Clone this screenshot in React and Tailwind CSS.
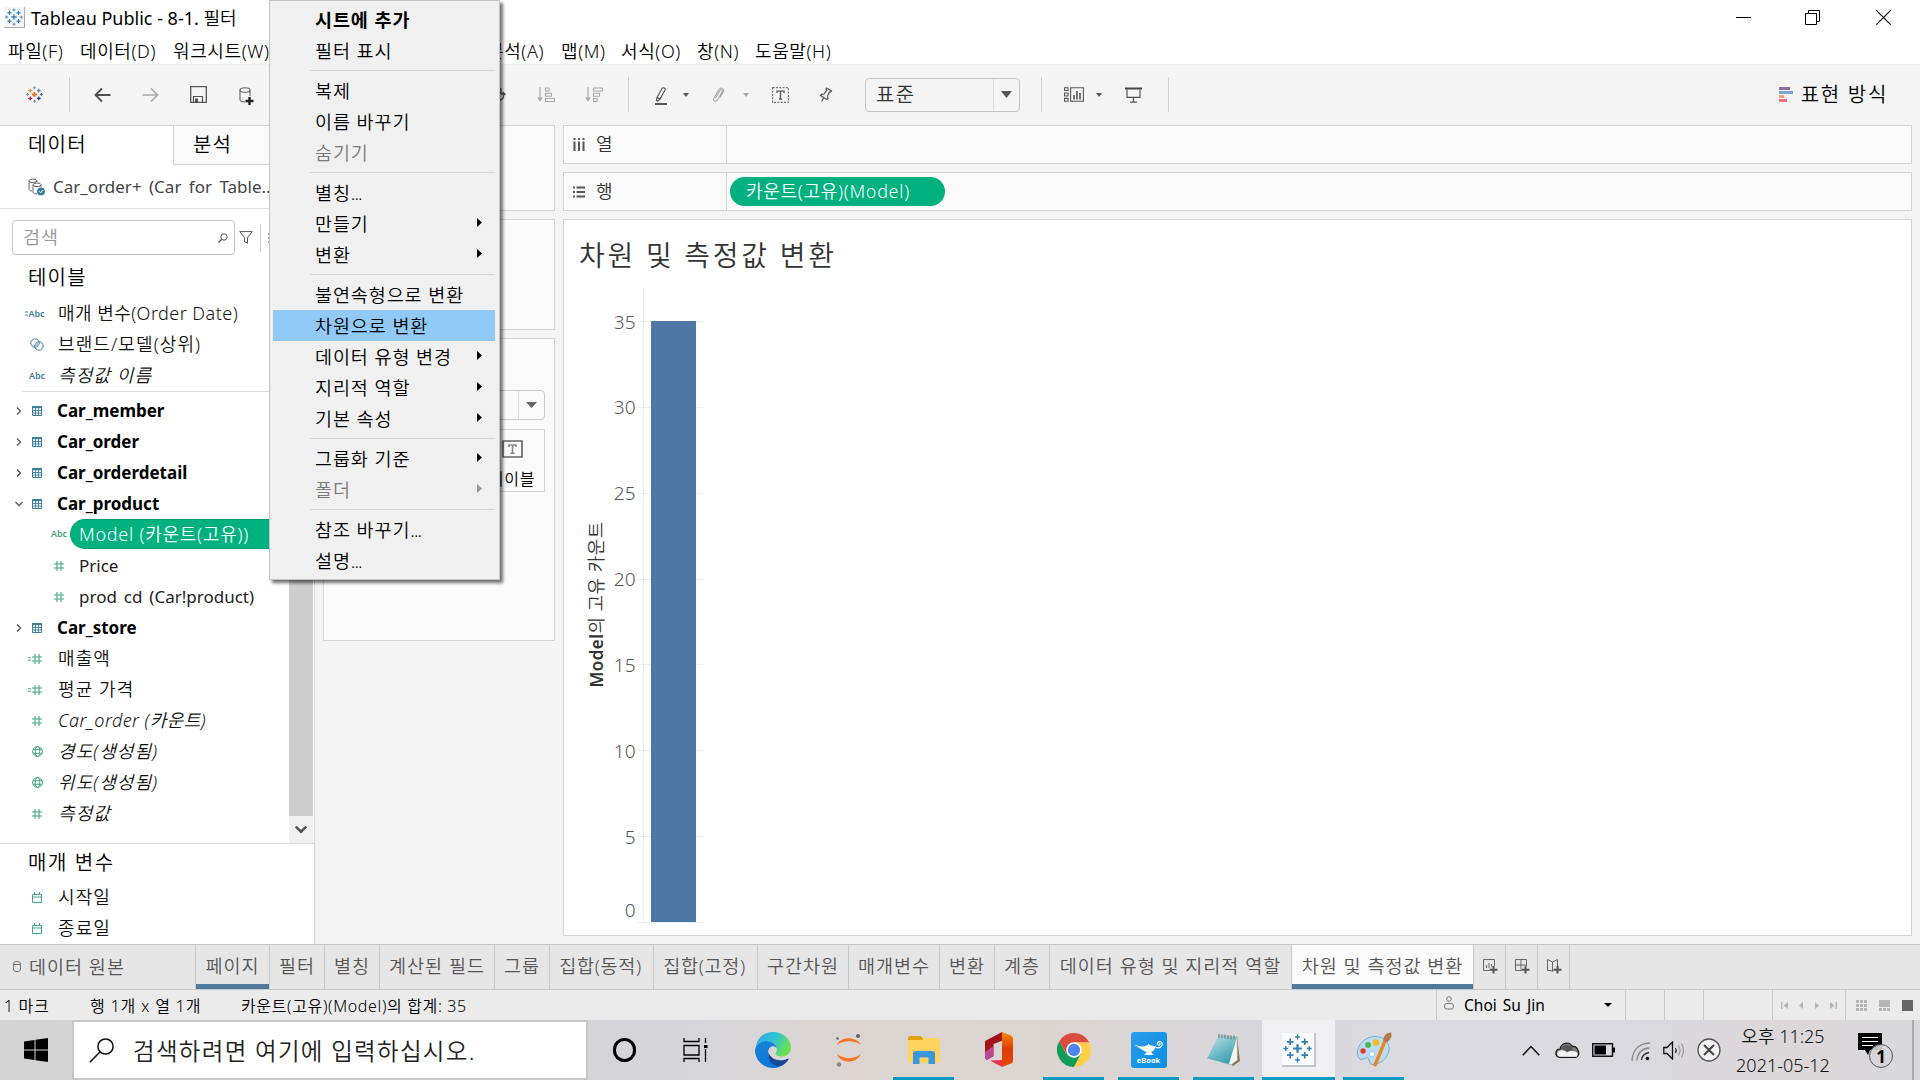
import React from "react";

const Svg = ({ w, h, vb, className = "", children }) => (
  <svg width={w} height={h} viewBox={vb || `0 0 ${w} ${h}`} className={`shrink-0 block ${className}`} fill="none" preserveAspectRatio="none">
    {children}
  </svg>
);

const plus = (x, y, r) => `M${x - r} ${y}H${x + r}M${x} ${y - r}V${y + r}`;

const TableauMark = ({ size, colors, sw = 1.4 }) => {
  const c = colors || Array(9).fill("#2f7fb3");
  return (
    <Svg w={size} h={size} vb="0 0 24 24">
      <path d={plus(12, 12, 3.6)} stroke={c[0]} strokeWidth={sw * 1.3} />
      <path d={plus(6, 6.5, 2.7)} stroke={c[1]} strokeWidth={sw} />
      <path d={plus(18, 6.5, 2.7)} stroke={c[2]} strokeWidth={sw} />
      <path d={plus(6, 17.5, 2.7)} stroke={c[3]} strokeWidth={sw} />
      <path d={plus(18, 17.5, 2.7)} stroke={c[4]} strokeWidth={sw} />
      <path d={plus(12, 2.5, 2)} stroke={c[5]} strokeWidth={sw * 0.8} />
      <path d={plus(12, 21.5, 2)} stroke={c[6]} strokeWidth={sw * 0.8} />
      <path d={plus(2.3, 12, 2)} stroke={c[7]} strokeWidth={sw * 0.8} />
      <path d={plus(21.7, 12, 2)} stroke={c[8]} strokeWidth={sw * 0.8} />
    </Svg>
  );
};

const brand = ["#e8762d", "#eb9b3a", "#59879b", "#c72035", "#1f457e", "#7199a6", "#7a8eb5", "#7199a6", "#5b6591"];

/* ---------- title + menu bar ---------- */

const MenuItem = ({ className = "", children }) => <span className={`shrink-0 whitespace-pre ${className}`}>{children}</span>;

const TitleBar = () => (
  <div className="flex h-[34px] items-center bg-white">
    <div className="ml-[4px] flex h-[21px] w-[21px] shrink-0 items-center justify-center border-b border-r border-[#aaa] bg-[#f4f6f8]">
      <TableauMark size={18} />
    </div>
    <span className="ml-[6px] mt-[3px] text-[18px] text-black"><span className="font-normal">Tableau Public - 8-1. </span>필터</span>
    <div className="ml-auto mr-[29px] flex items-center text-black">
      <Svg w={15} h={15}><path d="M0 7.5H15" stroke="#000" /></Svg>
      <Svg w={15} h={15} className="ml-[54px]"><path d="M3.5 3V.5H14.5V11.5H12M.5 3.5H11.5V14.5H.5Z" stroke="#000" /></Svg>
      <Svg w={15} h={15} className="ml-[56px]"><path d="M.3.3L14.7 14.7M14.7.3L.3 14.7" stroke="#000" strokeWidth="1.1" /></Svg>
    </div>
  </div>
);

const MenuBar = () => (
  <div className="flex h-[30px] items-center bg-white pl-[8px] pt-[4px] text-[18px] tracking-[0.6px] text-black">
    <MenuItem className="w-[72px]">파일(F)</MenuItem>
    <MenuItem className="w-[93px]">데이터(D)</MenuItem>
    <MenuItem>워크시트(W)</MenuItem>
    <div className="ml-auto flex w-[1433px]">
      <MenuItem className="w-[74px]">분석(A)</MenuItem>
      <MenuItem className="w-[60px]">맵(M)</MenuItem>
      <MenuItem className="w-[76px]">서식(O)</MenuItem>
      <MenuItem className="w-[58px]">창(N)</MenuItem>
      <MenuItem>도움말(H)</MenuItem>
    </div>
  </div>
);

/* ---------- toolbar ---------- */

const Slot = ({ className = "", children }) => (
  <div className={`flex h-[36px] shrink-0 items-center justify-center ${className}`}>{children}</div>
);
const Divider = ({ className = "" }) => <div className={`h-[35px] w-px shrink-0 bg-[#d0d0d0] ${className}`} />;
const Caret = ({ color = "#555" }) => <Svg w={6} h={4}><path d="M0 0H6L3 4Z" fill={color} /></Svg>;

const SortIcon = ({ desc }) => (
  <Svg w={18} h={16}>
    <path d="M3 0V12" stroke="#a9a9a9" strokeWidth="1.2" />
    <path d="M0 10.5H6L3 14.5Z" fill="#a9a9a9" />
    {desc ? (
      <path d="M8.5 1H17.5V4H8.5ZM8.5 6.3H14.5V9.3H8.5ZM8.5 11.5H12V14.5H8.5Z" stroke="#a9a9a9" strokeWidth="1.1" />
    ) : (
      <path d="M8.5 1H12V4H8.5ZM8.5 6.3H14.5V9.3H8.5ZM8.5 11.5H17.5V14.5H8.5Z" stroke="#a9a9a9" strokeWidth="1.1" />
    )}
  </Svg>
);

const Toolbar = () => (
  <div className="flex h-[61px] items-center border-t border-[#efefef] bg-[#f4f4f4] pb-px">
    <Slot className="w-[69px]"><TableauMark size={17} colors={brand} sw={2} /></Slot>
    <Divider />
    <Slot className="w-[64px]">
      <Svg w={17} h={16}><path d="M16.5 8H1.5M8 1.5L1.5 8L8 14.5" stroke="#4f4f4f" strokeWidth="1.8" /></Svg>
    </Slot>
    <Slot className="w-[32px]">
      <Svg w={17} h={16}><path d="M.5 8H15.5M9 1.5L15.5 8L9 14.5" stroke="#a9a9a9" strokeWidth="1.7" /></Svg>
    </Slot>
    <Slot className="w-[64px]">
      <Svg w={17} h={17}>
        <path d="M.7.7H16.3V16.3H.7Z" stroke="#555" strokeWidth="1.3" />
        <path d="M3.5 16V10.5H12.5V16" stroke="#555" strokeWidth="1.2" /><path d="M5 12.5H8V16H5Z" fill="#555" />
      </Svg>
    </Slot>
    <Slot className="w-[32px] pt-[4px]">
      <Svg w={15} h={19}>
        <ellipse cx="6" cy="3" rx="5" ry="2.3" stroke="#666" strokeWidth="1.1" />
        <path d="M1 3V12.5C1 14 3 15 6 15M11 3V9" stroke="#666" strokeWidth="1.1" />
        <path d="M10.5 10V18M6.5 14H14.5" stroke="#222" strokeWidth="2.4" />
      </Svg>
    </Slot>
    <Slot className="ml-[227px] w-[20px]">
      <Svg w={14} h={16}><path d="M1 2H9V6H1ZM8 13C12 12 12 9 11.5 6M9.5 8L11.5 5.5L13.5 8" stroke="#555" strokeWidth="1.3" /></Svg>
    </Slot>
    <Slot className="ml-[20px] w-[34px]"><SortIcon /></Slot>
    <Slot className="ml-[14px] w-[34px]"><SortIcon desc /></Slot>
    <Divider className="ml-[17px]" />
    <Slot className="ml-[16px] w-[32px] pt-[2px]">
      <Svg w={14} h={18}>
        <path d="M2.5 13.5L3 10.5L8 1.5Q9 .3 10.3 1T11 3L6 12L3.5 14.2ZM3 10.5L6 12" stroke="#555" strokeWidth="1.2" />
        <path d="M1 17H13" stroke="#555" strokeWidth="2" />
      </Svg>
    </Slot>
    <Slot className="ml-[4px] w-[10px]"><Caret /></Slot>
    <Slot className="ml-[10px] w-[34px]">
      <Svg w={14} h={16}>
        <path d="M4.5 11L9 3.5C10 2 12 3 11 5L6.5 13C5 15.5 1.5 14 3 11L8 2.5C9.5 0 13.5 1.5 12.5 4.5L9 10.5" stroke="#a9a9a9" strokeWidth="1.1" />
      </Svg>
    </Slot>
    <Slot className="ml-[6px] w-[10px]"><Caret color="#aaa" /></Slot>
    <Slot className="ml-[12px] w-[34px]">
      <Svg w={17} h={16}>
        <path d="M.6.6H16.4V15.4H.6Z" stroke="#777" strokeDasharray="2 1.3" strokeWidth="1.2" />
        <path d="M5 6V4.2H12V6M8.5 4.2V12M7 12H10" stroke="#555" strokeWidth="1.3" />
      </Svg>
    </Slot>
    <Slot className="ml-[12px] w-[34px]">
      <Svg w={14} h={16}>
        <path d="M7.5 1L12.5 4L11.5 5.2L10.5 5L8.5 9L9 11.5L8 12.5L1.5 8.5L2.5 7.3L5 7L7.8 3.2L7 2ZM5 10.5L2.5 14.5" stroke="#555" strokeWidth="1.2" />
      </Svg>
    </Slot>
    <div className="ml-[22px] flex h-[34px] w-[155px] shrink-0 items-center rounded-sm border border-[#c4c4c4]">
      <span className="ml-[10px] text-[20px] leading-none tracking-[1.4px] text-[#333]">표준</span>
      <div className="ml-auto flex h-full w-[26px] items-center justify-center border-l border-[#ddd]">
        <Svg w={11} h={7}><path d="M0 0H11L5.5 7Z" fill="#555" /></Svg>
      </div>
    </div>
    <Divider className="ml-[21px]" />
    <Slot className="ml-[15px] w-[34px]">
      <Svg w={20} h={15}>
        <path d="M.5.7H4V3.5H.5ZM.5 6H4V9H.5ZM.5 11.4H4V14.3H.5ZM6.6.7H19.4V14.3H6.6Z" stroke="#555" strokeWidth="1.1" />
        <path d="M10 12.5V8M13 12.5V4M16 12.5V6" stroke="#555" strokeWidth="1.6" />
      </Svg>
    </Slot>
    <Slot className="ml-[3px] w-[10px]"><Caret /></Slot>
    <Slot className="ml-[12px] w-[34px]">
      <Svg w={17} h={16}>
        <path d="M0 1.5H17" stroke="#444" strokeWidth="2" />
        <path d="M2 2.5V10.4H15V2.5M8.5 10.4V15M5 15.2H12" stroke="#555" strokeWidth="1.2" />
      </Svg>
    </Slot>
    <Divider className="ml-[18px]" />
    <div className="ml-auto mr-[32px] flex items-center gap-[8px]">
      <Svg w={14} h={15}>
        <path d="M0 0H11V3H0Z" fill="#86719a" /><path d="M0 4H14V7H0Z" fill="#7ba3cc" />
        <path d="M0 8H5V11H0Z" fill="#f5a27d" /><path d="M0 12H8V15H0Z" fill="#fb6f7f" />
      </Svg>
      <span className="mt-px text-[20px] leading-none tracking-[1.7px] text-black">표현 방식</span>
    </div>
  </div>
);

/* ---------- data pane ---------- */

const BLUE = "#3b7f9f";
const GREEN = "#44a683";

const Hash = () => <Svg w={10} h={10}><path d="M3 0V10M7 0V10M0 3H10M0 7H10" stroke={GREEN} strokeWidth="1.1" /></Svg>;
const CalcHash = () => (
  <Svg w={14} h={10} className="-ml-[4px]"><path d="M0 3.7H3M0 6.3H3M7 0V10M11 0V10M4 3H14M4 7H14" stroke={GREEN} strokeWidth="1.1" /></Svg>
);
const Globe = () => (
  <Svg w={11} h={11}>
    <circle cx="5.5" cy="5.5" r="4.9" stroke={GREEN} /><ellipse cx="5.5" cy="5.5" rx="2.2" ry="4.9" stroke={GREEN} /><path d="M1 3.7H10M1 7.3H10" stroke={GREEN} />
  </Svg>
);
const Rings = () => (
  <Svg w={14} h={13}><circle cx="5" cy="5" r="4.2" stroke={BLUE} /><circle cx="9" cy="8" r="4.2" stroke={BLUE} /><circle cx="7" cy="6.5" r="2" fill="#9cc3d3" /></Svg>
);
const TableIcon = () => (
  <Svg w={10} h={10}>
    <path d="M.5.5H9.5V9.5H.5Z" fill="#fff" stroke={BLUE} /><path d="M0 1.2H10" stroke={BLUE} strokeWidth="2" /><path d="M0 4.5H10M0 7H10M3.5 2V10M6.5 2V10" stroke={BLUE} strokeWidth=".9" />
  </Svg>
);
const Cal = () => <Svg w={10} h={11}><path d="M.5 2.5H9.5V10.5H.5ZM.5 5H9.5M2.5 0V2.5M7.5 0V2.5" stroke={GREEN} /></Svg>;
const Abc = ({ calc, green }) => (
  <span className={`flex items-center whitespace-nowrap text-[9px] font-semibold leading-none ${calc ? "-ml-[4px]" : ""} ${green ? "text-[#44a683]" : "text-[#3b7f9f]"}`}>
    {calc && <Svg w={3} h={5}><path d="M0 1H3M0 4H3" stroke={BLUE} /></Svg>}Abc
  </span>
);
const Chevron = ({ open }) => (
  <Svg w={8} h={8}><path d={open ? "M.5 2L4 5.5L7.5 2" : "M2 .5L5.5 4L2 7.5"} stroke="#555" strokeWidth="1.3" /></Svg>
);

const Field = ({ icon, children, italic, mixed }) => (
  <div className="flex h-[31px] shrink-0 items-center">
    <div className="ml-[22px] flex w-[30px] shrink-0 items-center justify-center">{icon}</div>
    <span className={`ml-[6px] whitespace-pre text-[18px] text-[#111] ${mixed ? "tracking-[0.45px]" : "tracking-[1.1px]"} ${italic ? "italic" : ""}`}>{children}</span>
  </div>
);
const Group = ({ open, children }) => (
  <div className="flex h-[31px] shrink-0 items-center">
    <div className="ml-[15px] w-[8px]"><Chevron open={open} /></div>
    <div className="ml-[9px] w-[10px]"><TableIcon /></div>
    <span className="ml-[15px] text-[17px] font-bold text-black">{children}</span>
  </div>
);
const SubField = ({ children }) => (
  <div className="flex h-[31px] shrink-0 items-center">
    <div className="ml-[54px] w-[10px]"><Hash /></div>
    <span className="ml-[15px] whitespace-pre text-[17px] font-normal [word-spacing:2.5px] text-[#222]">{children}</span>
  </div>
);

const DataPane = () => (
  <div className="flex w-[315px] shrink-0 flex-col border-r border-[#d4d4d4] bg-white">
    <div className="flex h-[40px] shrink-0 border-t border-[#d4d4d4]">
      <div className="flex w-[173px] items-center pl-[28px] pb-px text-[20px] tracking-[1.2px] text-black">데이터</div>
      <div className="flex flex-1 items-center border-b border-l border-[#d4d4d4] bg-[#fafafa] pb-px pl-[19px] text-[20px] tracking-[1.2px] text-black">분석</div>
    </div>
    <div className="flex h-[44px] shrink-0 items-center border-b border-[#e2e2e2] pl-[28px]">
      <Svg w={18} h={18}>
        <ellipse cx="5" cy="2.8" rx="4" ry="1.8" stroke="#666" /><path d="M1 3V11C1 12 2 13 4 13M9 3V4" stroke="#666" />
        <ellipse cx="9" cy="6.8" rx="4" ry="1.8" stroke="#666" /><path d="M5 7V14C5 15 6.5 16 9 16M13 7V9" stroke="#666" />
        <circle cx="13" cy="13.4" r="3.9" fill={BLUE} /><path d="M11.3 13.3L12.6 14.7L15 12.2" stroke="#fff" />
      </Svg>
      <span className="ml-[7px] mt-px whitespace-pre text-[17px] font-normal [word-spacing:3px] text-[#444]">Car_order+ (Car for Table..</span>
    </div>
    <div className="flex h-[57px] shrink-0 items-center pl-[12px]">
      <div className="flex h-[35px] w-[223px] items-center rounded-sm border border-[#c4c4c4] px-[9px]">
        <span className="ml-px text-[18.5px] leading-none tracking-[1px] text-[#999]">검색</span>
        <Svg w={10} h={10} className="ml-auto -mr-[3px]"><circle cx="6" cy="4" r="3.2" stroke="#555" /><path d="M3.7 6.3L.5 9.5" stroke="#555" strokeWidth="1.3" /></Svg>
      </div>
      <Svg w={14} h={13} className="ml-[4px]"><path d="M.7.6H13.3L8.5 6.5V12.2L5.5 10.5V6.5Z" stroke="#555" /></Svg>
      <div className="ml-[7px] h-[28px] w-px bg-[#ccc]" />
      <Svg w={14} h={10} className="ml-[7px]"><path d="M0 1H2M4 1H14M0 5H2M4 5H14M0 9H2M4 9H14" stroke="#555" /></Svg>
    </div>
    <div className="flex h-[577px] shrink-0">
      <div className="flex w-[289px] flex-col">
        <div className="flex h-[32px] shrink-0 items-center pb-[8px] pl-[28px] text-[20px] leading-none tracking-[1.2px] text-black">테이블</div>
        <div className="flex h-[93px] flex-col">
          <Field icon={<Abc calc />} mixed>매개 변수(Order Date)</Field>
          <Field icon={<Rings />}>브랜드/모델(상위)</Field>
          <Field icon={<Abc />} italic>측정값 이름</Field>
        </div>
        <div className="ml-[22px] mb-[3px] h-px shrink-0 bg-[#dcdcdc]" />
        <Group>Car_member</Group>
        <Group>Car_order</Group>
        <Group>Car_orderdetail</Group>
        <Group open>Car_product</Group>
        <div className="flex h-[31px] shrink-0 items-center pb-[2px]">
          <div className="ml-[50px] flex w-[18px] items-center justify-center"><Abc green /></div>
          <div className="ml-[2px] flex h-[30px] flex-1 items-center rounded-l-full border border-r-0 border-[#0c9c6c] bg-[#00b180] pl-[8px] pt-px">
            <span className="whitespace-pre text-[18px] tracking-[0.75px] text-white">Model (카운트(고유))</span>
          </div>
        </div>
        <SubField>Price</SubField>
        <SubField>prod cd (Car!product)</SubField>
        <Group>Car_store</Group>
        <Field icon={<CalcHash />}>매출액</Field>
        <Field icon={<CalcHash />}>평균 가격</Field>
        <Field icon={<Hash />} italic mixed>Car_order (카운트)</Field>
        <Field icon={<Globe />} italic>경도(생성됨)</Field>
        <Field icon={<Globe />} italic>위도(생성됨)</Field>
        <Field icon={<Hash />} italic>측정값</Field>
      </div>
      <div className="flex w-[24px] flex-col bg-[#cdcdcd]">
        <div className="mt-auto flex h-[27px] items-center justify-center bg-[#f0f0f0] pb-px">
          <Svg w={12} h={9}><path d="M.8 1.5L6 6.7L11.2 1.5" stroke="#505050" strokeWidth="2.4" /></Svg>
        </div>
      </div>
    </div>
    <div className="flex flex-1 flex-col border-t border-[#dcdcdc]">
      <div className="flex h-[38px] shrink-0 items-center pb-px pl-[28px] text-[20px] leading-none tracking-[1.6px] text-black">매개 변수</div>
      <Field icon={<Cal />}>시작일</Field>
      <Field icon={<Cal />}>종료일</Field>
    </div>
  </div>
);

/* ---------- cards ---------- */

const Cards = () => (
  <div className="flex w-[232px] shrink-0 flex-col gap-[8px]">
    <div className="h-[86px] border border-[#d4d4d4] bg-[#fafafa]" />
    <div className="h-[111px] border border-[#d4d4d4] bg-[#fafafa]" />
    <div className="flex h-[303px] flex-col items-end border border-[#d4d4d4] bg-[#fafafa] pr-[9px] pt-[51px]">
      <div className="flex h-[30px] w-[212px] justify-end rounded-sm border border-[#ccc]">
        <div className="flex w-[26px] items-center justify-center border-l border-[#ddd]">
          <Svg w={11} h={6}><path d="M0 0H11L5.5 6Z" fill="#666" /></Svg>
        </div>
      </div>
      <div className="mt-[9px] flex h-[63px] w-[66px] flex-col items-center border border-[#d4d4d4]">
        <Svg w={21} h={18} className="mt-[10px]">
          <path d="M1 1H20V17H1Z" stroke="#666" strokeWidth="1.7" /><path d="M7 7V5H14V7M10.5 5V13M8.5 13.2H12.5" stroke="#888" strokeWidth="1.6" />
        </Svg>
        <span className="mt-[10px] whitespace-nowrap text-[16px] leading-[22px] tracking-[1px] text-black">테이블</span>
      </div>
    </div>
  </div>
);

/* ---------- worksheet ---------- */

const Shelf = ({ icon, label, children }) => (
  <div className="flex h-[39px] shrink-0 border border-[#d4d4d4] bg-[#fafafa]">
    <div className="flex w-[163px] items-center border-r border-[#d4d4d4] pl-[9px]">
      {icon}
      <span className="ml-[11px] text-[18px] text-[#333]">{label}</span>
    </div>
    <div className="flex items-center pl-[3px]">{children}</div>
  </div>
);

const ticks = [35, 30, 25, 20, 15, 10, 5, 0];

const Chart = () => (
  <Svg w={160} h={660}>
    {ticks.map((t) => {
      const y = 45.5 + (35 - t) * 17.17;
      return (
        <g key={t}>
          <path d={`M74 ${Math.floor(y) + 0.5}H139`} stroke="#ededed" />
          <text x="71.5" y={(t === 0 ? y - 12 : y) + 7} textAnchor="end" fontSize="19" fontWeight="300" fill="#555">{t}</text>
        </g>
      );
    })}
    <path d="M79.5 12V647" stroke="#ededed" />
    <rect x="87" y="45" width="45" height="601" fill="#4e79a7" />
    <g transform="translate(38.5 411.5) rotate(-90)" fontSize="18" letterSpacing="0.45" fill="#333">
      <text><tspan fontWeight="600" fontSize="17">Model</tspan><tspan>의 고유 카운트</tspan></text>
    </g>
  </Svg>
);

const Worksheet = () => (
  <div className="flex w-[1349px] shrink-0 flex-col gap-[8px]">
    <Shelf
      label="열"
      icon={<Svg w={12} h={13}><path d="M1.5 0V2M6 0V2M10.5 0V2M1.5 3.5V13M6 3.5V13M10.5 3.5V13" stroke="#555" strokeWidth="2" /></Svg>}
    />
    <Shelf label="행" icon={<Svg w={12} h={12}><path d="M0 1.5H2M3.5 1.5H12M0 6H2M3.5 6H12M0 10.5H2M3.5 10.5H12" stroke="#555" strokeWidth="2" /></Svg>}>
      <div className="flex h-[29px] w-[215px] items-center whitespace-nowrap rounded-full bg-[#00b180] pb-[2px] pl-[16px] text-[18px] leading-none tracking-[0.7px] text-white">카운트(고유)(Model)</div>
    </Shelf>
    <div className="flex h-[717px] flex-col border border-[#d4d4d4] bg-white">
      <div className="mt-[14px] h-[44px] pl-[15px] text-[28px] leading-[42px] tracking-[2.7px] text-[#333]">차원 및 측정값 변환</div>
      <Chart />
    </div>
  </div>
);

/* ---------- sheet tabs + status ---------- */

const Tab = ({ className, children, mark, active }) => (
  <div className={`flex h-full shrink-0 flex-col border-r border-[#c9c9c9] ${active ? "bg-[#fafafa]" : ""} ${className}`}>
    <div className="flex flex-1 items-center justify-center whitespace-pre pt-[3px] leading-none">{children}</div>
    <div className={`h-[5px] ${mark ? "bg-[#4f789b]" : ""}`} />
  </div>
);
const AddMark = ({ d }) => (
  <Svg w={16} h={16}>
    <path d={d} stroke="#666" />
    <path d="M11.5 8V15.5M7.5 11.7H15.5" stroke="#e6e6e6" strokeWidth="4" />
    <path d="M11.5 8V15.5M7.5 11.7H15.5" stroke="#555" strokeWidth="2" />
  </Svg>
);

const SheetTabs = () => (
  <div className="flex h-[46px] shrink-0 border-b border-t border-[#c9c9c9] bg-[#e6e6e6] text-[18.5px] tracking-[1px] text-[#555]">
    <div className="flex w-[196px] shrink-0 items-center border-r border-[#c9c9c9] pb-[3px] pl-[13px] leading-none">
      <Svg w={8} h={11} className="mt-px"><rect x=".5" y=".5" width="7" height="10" rx="2.5" stroke="#777" /><path d="M.5 3.5H7.5" stroke="#777" /></Svg>
      <span className="ml-[8px] mt-[3px]">데이터 원본</span>
    </div>
    <Tab className="w-[74px]" mark>페이지</Tab>
    <Tab className="w-[55px]">필터</Tab>
    <Tab className="w-[55px]">별칭</Tab>
    <Tab className="w-[115px]">계산된 필드</Tab>
    <Tab className="w-[55px]">그룹</Tab>
    <Tab className="w-[104px] pr-[2px] tracking-[0.7px]">집합(동적)</Tab>
    <Tab className="w-[104px] pr-[2px] tracking-[0.7px]">집합(고정)</Tab>
    <Tab className="w-[91px]">구간차원</Tab>
    <Tab className="w-[91px]">매개변수</Tab>
    <Tab className="w-[55px]">변환</Tab>
    <Tab className="w-[55px]">계층</Tab>
    <Tab className="w-[242px]">데이터 유형 및 지리적 역할</Tab>
    <Tab className="w-[182px]" mark active>차원 및 측정값 변환</Tab>
    <Tab className="w-[32px]"><AddMark d="M1.5 1.5H12.5V12.5H1.5ZM4.5 10V7M7 10V5M9.5 10V6" /></Tab>
    <Tab className="w-[32px]"><AddMark d="M1.5 1.5H12.5V12.5H1.5ZM7 1.5V12.5M1.5 7H12.5" /></Tab>
    <Tab className="w-[32px]"><AddMark d="M1.5 1.5L6.5 4L11.5 1.5V12.5H8L6.5 13.5L5 12.5H1.5ZM6.5 4V13" /></Tab>
  </div>
);

const StatusBar = () => (
  <div className="flex h-[30px] shrink-0 items-center bg-[#ebebeb] text-[16px] leading-none tracking-[0.65px] text-black">
    <span className="ml-[4px] mt-[2px] w-[86px] whitespace-pre">1 마크</span>
    <span className="mt-[2px] w-[151px] whitespace-pre [word-spacing:0.5px]">행 1개 x 열 1개</span>
    <span className="mt-[2px] whitespace-pre">카운트(고유)(Model)의 합계: 35</span>
    <div className="ml-auto flex h-full">
      <div className="flex w-[189px] items-center border-l border-[#c9c9c9] pl-[7px]">
        <Svg w={10} h={14} className="-mt-[4px]"><circle cx="5" cy="3" r="2.3" stroke="#777" /><rect x=".6" y="7.5" width="8.8" height="5.5" rx="2" stroke="#777" /></Svg>
        <span className="ml-[10px] mt-[2px] whitespace-pre text-[15.5px] font-normal tracking-[0px] [word-spacing:2px]">Choi Su Jin</span>
        <Svg w={8} h={4} className="ml-auto mr-[13px]"><path d="M0 0H8L4 4Z" fill="#000" /></Svg>
      </div>
      <div className="w-[39px] border-l border-[#c9c9c9]" />
      <div className="w-[39px] border-l border-[#c9c9c9]" />
      <div className="w-[69px] border-l border-[#c9c9c9]" />
      <div className="flex w-[73px] items-center justify-between border-l border-[#c9c9c9] px-[8px]">
        <Svg w={7} h={7}><path d="M.7 0V7" stroke="#b5b5b5" strokeWidth="1.4" /><path d="M7 0L2.5 3.5L7 7Z" fill="#b5b5b5" /></Svg>
        <Svg w={4} h={7}><path d="M4 0L0 3.5L4 7Z" fill="#b5b5b5" /></Svg>
        <Svg w={4} h={7}><path d="M0 0L4 3.5L0 7Z" fill="#b5b5b5" /></Svg>
        <Svg w={7} h={7}><path d="M6.3 0V7" stroke="#b5b5b5" strokeWidth="1.4" /><path d="M0 0L4.5 3.5L0 7Z" fill="#b5b5b5" /></Svg>
      </div>
      <div className="flex w-[75px] items-center gap-[12px] border-l border-[#c9c9c9] pl-[10px]">
        <Svg w={11} h={11}><path d="M0 1.5H11M0 5.5H11M0 9.5H11" stroke="#b5b5b5" strokeWidth="3" strokeDasharray="3 1" /></Svg>
        <Svg w={11} h={11}><path d="M0 0H11V7H0Z" fill="#b5b5b5" /><path d="M0 9.5H11" stroke="#b5b5b5" strokeWidth="3" strokeDasharray="3 1" /></Svg>
        <div className="h-[11px] w-[11px] bg-[#666]" />
      </div>
    </div>
  </div>
);

/* ---------- taskbar ---------- */

const TaskApp = ({ className = "", open, children }) => (
  <div className={`flex h-full shrink-0 flex-col ${className}`}>
    <div className="flex flex-1 items-center justify-center pt-[2px]">{children}</div>
    <div className={`h-[3px] ${open ? "bg-[#0a9bc2]" : ""}`} />
  </div>
);

const Edge = () => (
  <Svg w={36} h={36}>
    <defs>
      <linearGradient id="e1" x1="0" y1="0" x2="1" y2="0.4"><stop offset="0" stopColor="#33a8ea" /><stop offset=".55" stopColor="#2fc3d5" /><stop offset="1" stopColor="#6be04f" /></linearGradient>
      <linearGradient id="e2" x1="0" y1="0" x2="0.6" y2="1"><stop offset="0" stopColor="#1783d6" /><stop offset="1" stopColor="#0b78d8" /></linearGradient>
    </defs>
    <path d="M1 15C2 6 9 0 18 0C28 0 36 7 36 15.5C36 21 32 24.5 27 24.5C23 24.5 20.5 23 20.5 21.5C20.5 20.5 22 20 22 17.5C22 13 17 9 11 9C6 9 2.5 11.5 1 15Z" fill="url(#e1)" />
    <path d="M0 18C1 12 6 9 11 9C17 9 22 13 22 17.5C22 15 19 13.5 16.5 14.5C13 16 12 21 14 26C16 31 20 34 25 34.5C23 35.5 20.5 36 18 36C8 36 0 28 0 18Z" fill="url(#e2)" />
    <path d="M13.5 20C12 27 16.5 34.5 25 34.5C29 33 32 30 33.5 27.5C34 26.5 33.5 26.3 32.5 26.7C24 30.5 15 27 13.5 20Z" fill="#15499a" />
  </Svg>
);
const Jupyter = () => (
  <Svg w={26} h={34}>
    <path d="M1 12C4 3 21 3 25 12C19 7 7 7 1 12ZM1 21C4 31 21 31 25 21C19 26.5 7 26.5 1 21Z" fill="#f37726" />
    <circle cx="22" cy="3" r="2" fill="#666" /><circle cx="3" cy="31.5" r="2.2" fill="#888" /><circle cx="1.5" cy="5.5" r="1.2" fill="#666" />
  </Svg>
);
const Folder = () => (
  <Svg w={32} h={28}>
    <path d="M0 2Q0 0 2 0H13L16 4H0Z" fill="#e3a008" />
    <path d="M0 4H14L17 2H30Q32 2 32 4V25Q32 27 30 27H2Q0 27 0 25Z" fill="#ffd45e" />
    <path d="M5 28V18Q5 15 8 15H24Q27 15 27 18V28H20.5V21.5H11.5V28Z" fill="#3c97e0" />
  </Svg>
);
const Office = () => (
  <Svg w={28} h={35}>
    <defs><linearGradient id="of" x1="0" y1="0" x2="0" y2="1"><stop offset="0" stopColor="#f58a05" /><stop offset=".5" stopColor="#de3b08" /><stop offset="1" stopColor="#e8480a" /></linearGradient></defs>
    <path d="M0 9L17 0L19 8L8.5 12V24L2 28Q0 27 0 24Z" fill="#a4131a" />
    <path d="M0 20L8.5 14V24L2 28Q0 27 0 24Z" fill="#b94a93" />
    <path d="M17 0L26 3.5Q28 4.5 28 6.5V28.5Q28 31 26 31.5L17 35V7Z" fill="url(#of)" />
    <path d="M5 28.5L17 28V35Z" fill="#ee2f50" />
  </Svg>
);
const Chrome = () => (
  <Svg w={34} h={34} vb="0 0 48 48">
    <path d="M24 24L13.6 30L3.2 12A24 24 0 0 0 24 48L34.4 30Z" fill="#109d59" />
    <path d="M24 13H45.3A24 24 0 0 1 24 48L34 29Z" fill="#ffce44" />
    <path d="M24 13H45.3A24 24 0 0 0 3.2 12L14 30Z" fill="#dc4b3e" />
    <circle cx="24" cy="24" r="11" fill="#fff" /><circle cx="24" cy="24" r="8.7" fill="#4a85f0" />
  </Svg>
);
const EBook = () => (
  <div className="flex h-[36px] w-[36px] flex-col items-center rounded-[3px] bg-[linear-gradient(135deg,#2d9de8,#1494e6_60%,#0f8fe2)] pt-[9px]">
    <Svg w={30} h={14}>
      <path d="M0 4C4 4 6 6 9 5.5C11 5 12 4.5 13.5 4L14.5 2.5L15.5 4C18 4.5 20 5 22 5.5C21 8.5 19 10.5 17 11L20 14H10L13 11C9 10.5 5 6 0 4Z" fill="#fff" />
      <path d="M22 6.5C27 8 30 3 27 1C24 -.5 22 3 24.5 4C26 4.5 26.5 2.5 25.5 2.5" stroke="#fff" strokeWidth="1.1" />
    </Svg>
    <span className="text-[7.5px] font-bold leading-[10px] text-white">eBook</span>
  </div>
);
const Notepad = () => (
  <Svg w={34} h={34}>
    <defs><linearGradient id="np" x1="0" y1="0" x2="0.6" y2="1"><stop offset="0" stopColor="#bfe6ea" /><stop offset="1" stopColor="#3c9fb2" /></linearGradient></defs>
    <path d="M30 4L33 28L26 33L22 30Z" fill="#8a7a50" />
    <path d="M30 3L30.5 27L24 32L14 29Z" fill="#f5f5f0" stroke="#999" strokeWidth=".6" />
    <path d="M12 2L30 4L22 31L0 25.5Z" fill="url(#np)" />
    <path d="M12 1V5M15 1.3V5.3M18 1.6V5.6M21 2V6M24 2.3V6.3M27 2.6V6.6" stroke="#777" strokeWidth="1.2" />
  </Svg>
);
const Paint = () => (
  <Svg w={36} h={36}>
    <path d="M3 26C-1 20 3 10 12 6C21 2 32 6 33 15C34 23 27 32 17 32.5C12 32.5 14 28 12 26C10 24.5 5 30 3 26Z" fill="#b9dcf0" stroke="#6ba0c6" strokeWidth=".8" />
    <circle cx="7" cy="19" r="2.7" fill="#df3d2c" /><circle cx="12" cy="13" r="3" fill="#4db648" /><circle cx="20" cy="10.5" r="3.2" fill="#f6b81a" /><circle cx="16" cy="22" r="2.5" fill="#fff" stroke="#8bb3cc" strokeWidth=".6" />
    <path d="M29 9L19 33" stroke="#e98724" strokeWidth="3.4" strokeLinecap="round" />
    <path d="M27.5 9C27 5 29 1 35 0.5C37 5 33 9 30.5 10.5Z" fill="#b07a4c" />
  </Svg>
);

const Taskbar = () => (
  <div className="flex h-[60px] shrink-0 bg-[linear-gradient(90deg,#d4d4d4_0%,#d5d5d8_30%,#d6d6da_36%,#dcd5d2_44%,#dbd5d2_55%,#d7d7dc_66%,#dadae0_75%,#d9d9df_85%,#dcd7d9_93%,#d8d8db_100%)]">
    <div className="flex w-[72px] items-center justify-center">
      <Svg w={24} h={24}><path d="M0 3.5L10.5 2V11.5H0ZM11.5 1.8L24 0V11.5H11.5ZM0 12.5H10.5V22L0 20.5ZM11.5 12.5H24V24L11.5 22.2Z" fill="#000" /></Svg>
    </div>
    <div className="flex h-[60px] w-[516px] shrink-0 items-center border-2 border-[#c8c8c8] bg-white pl-[15px]">
      <Svg w={25} h={25}><circle cx="16.5" cy="8.5" r="7.6" stroke="#111" strokeWidth="1.5" /><path d="M11 14L.8 24.2" stroke="#111" strokeWidth="1.6" /></Svg>
      <span className="ml-[19px] mt-[3px] whitespace-pre text-[23.5px] leading-none tracking-[1.3px] text-[#222]">검색하려면 여기에 입력하십시오.</span>
    </div>
    <TaskApp className="w-[72px]"><div className="h-[24px] w-[23px] rounded-full border-[3px] border-black" /></TaskApp>
    <TaskApp className="w-[72px]">
      <Svg w={26} h={24}><path d="M1 0V3.5H16V0M1 24V20.5H16V24M1 7.5H16V17H1ZM22.5 0V5M22.5 11V24" stroke="#000" strokeWidth="1.3" /><rect x="21" y="7" width="3.5" height="3" fill="#000" /></Svg>
    </TaskApp>
    <TaskApp className="w-[82px]"><Edge /></TaskApp>
    <TaskApp className="w-[70px]"><Jupyter /></TaskApp>
    <TaskApp className="ml-[9px] w-[61px]" open><Folder /></TaskApp>
    <TaskApp className="ml-[14px] w-[61px]"><Office /></TaskApp>
    <TaskApp className="ml-[14px] w-[61px]" open><Chrome /></TaskApp>
    <TaskApp className="ml-[14px] w-[61px]" open><EBook /></TaskApp>
    <TaskApp className="ml-[14px] w-[61px]" open><Notepad /></TaskApp>
    <TaskApp className="ml-[8px] w-[73px] bg-[#f0f0f2]" open>
      <div className="flex h-[34px] w-[34px] items-center justify-center border-b-2 border-r-2 border-[#c2c6ca] bg-[#fafbfc]"><TableauMark size={29} /></div>
    </TaskApp>
    <TaskApp className="ml-[8px] w-[61px]" open><Paint /></TaskApp>
    <div className="ml-auto flex h-full items-center">
      <Svg w={18} h={11}><path d="M.7 10.3L9 1.5L17.3 10.3" stroke="#111" strokeWidth="1.5" /></Svg>
      <Svg w={25} h={18} className="ml-[15px]">
        <path d="M5 16.5C-1 15.5 0 8 5 8C6 2 14 -.5 17.5 5.5C23 5 26.5 14.5 20.5 16.5Z" fill="#777" stroke="#111" strokeWidth="1.2" />
        <path d="M6 8C9 8 11 9.5 12.5 11L18 8C17 4 9 2 6 8Z" fill="#555" />
        <path d="M4 15.5C1 14.5 2 9.5 6 9.3C9 9 11 10.5 12 11.5C15 9.5 21 9.5 22.7 12.5C23 15 21.5 15.8 20 15.8H6Z" fill="#f1f1f3" />
      </Svg>
      <Svg w={23} h={14} className="ml-[12px]"><path d="M.7.7H20.5V13.3H.7Z" stroke="#111" strokeWidth="1.4" /><path d="M2.5 2.5H14V11.500H2.5ZM20.5 4.500H23V9.500H20.5Z" fill="#000" /></Svg>
      <Svg w={20} h={20} className="ml-[16px] mt-[4px]">
        <circle cx="16.5" cy="16.5" r="1.8" fill="#000" />
        <path d="M10.5 18C11 13.5 13 11.5 18 10.5" stroke="#333" strokeWidth="1.3" /><path d="M6 18.5C6.5 11 10.5 6.5 18.5 6M1 19C1.5 8 8 1.5 19 1" stroke="#888" strokeWidth="1.3" />
      </Svg>
      <Svg w={22} h={19} className="ml-[12px]">
        <path d="M.8 6.5H4L9.5 1V18L4 12.5H.8Z" stroke="#111" strokeWidth="1.3" /><path d="M12.5 7Q14 9.5 12.5 12" stroke="#333" strokeWidth="1.3" />
        <path d="M15.5 4.5Q18.5 9.5 15.5 14.5M18.5 2.5Q22.5 9.5 18.5 16.5" stroke="#999" strokeWidth="1.2" />
      </Svg>
      <Svg w={24} h={24} className="ml-[12px]"><circle cx="12" cy="12" r="11" fill="#f2f2f2" stroke="#555" strokeWidth="1.3" /><path d="M7 7L17 17M17 7L7 17" stroke="#444" strokeWidth="2" /></Svg>
      <div className="ml-[6px] flex w-[116px] flex-col items-center pt-[2px] pr-[4px] text-[18px] leading-[29px] text-[#111]">
        <span className="whitespace-pre">오후 11:25</span>
        <span className="whitespace-nowrap">2021-05-12</span>
      </div>
      <div className="relative ml-[15px] h-[36px] w-[36px]">
        <Svg w={24} h={24}><path d="M0 1H24V18H12L10 23L7 18H0Z" fill="#000" /><path d="M4 5.5H20M4 9.5H20M4 13.5H15" stroke="#fff" strokeWidth="1.2" /></Svg>
        <div className="absolute left-[11px] top-[12px] flex h-[24px] w-[24px] items-center justify-center rounded-full border border-[#555] bg-[#d5d5d8]/90 text-[17px] font-bold leading-none text-black">1</div>
      </div>
      <div className="ml-[18px] h-full w-[2px] bg-[#aaa]" />
      <div className="w-[6px]" />
    </div>
  </div>
);

/* ---------- context menu ---------- */

const Item = ({ children, sub, bold, disabled, selected, dots }) => (
  <div
    className={`ml-[3px] mr-[4px] flex h-[31px] shrink-0 items-center pl-[42px] pr-[13px] pt-[2px] text-[18.5px] leading-none tracking-[0.9px] ${bold ? "font-bold" : ""} ${disabled ? "text-[#7a7a7a]" : "text-black"} ${selected ? "bg-[#91c9f7]" : ""}`}
  >
    <span className="whitespace-pre">{children}{dots && <span className="tracking-[-0.9px]">...</span>}</span>
    {sub && <Svg w={5} h={9} className="ml-auto -mt-[4px]"><path d="M0 0L5 4.5L0 9Z" fill={disabled ? "#999" : "#000"} /></Svg>}
  </div>
);
const Sep = () => <div className="ml-[40px] mr-[4px] mt-[4px] mb-[4px] h-px shrink-0 bg-[#d5d5d5]" />;

const ContextMenu = () => (
  <div className="absolute left-[269px] top-0 flex h-[580px] w-[231px] flex-col border border-[#c4c4c4] bg-[#f0f0f0] py-[3px] shadow-[3px_3px_3px_rgba(0,0,0,0.55)]">
    <Item bold>시트에 추가</Item>
    <Item>필터 표시</Item>
    <Sep />
    <Item>복제</Item>
    <Item>이름 바꾸기</Item>
    <Item disabled>숨기기</Item>
    <Sep />
    <Item dots>별칭</Item>
    <Item sub>만들기</Item>
    <Item sub>변환</Item>
    <Sep />
    <Item>불연속형으로 변환</Item>
    <Item selected>차원으로 변환</Item>
    <Item sub>데이터 유형 변경</Item>
    <Item sub>지리적 역할</Item>
    <Item sub>기본 속성</Item>
    <Sep />
    <Item sub>그룹화 기준</Item>
    <Item sub disabled>폴더</Item>
    <Sep />
    <Item dots>참조 바꾸기</Item>
    <Item dots>설명</Item>
  </div>
);

export default function App() {
  return (
    <div className="relative flex h-[1080px] w-[1920px] flex-col overflow-hidden bg-[#f4f4f4] font-['Noto_Sans','Noto_Sans_CJK_KR',sans-serif] font-[350]">
      <TitleBar />
      <MenuBar />
      <Toolbar />
      <div className="flex h-[819px] shrink-0">
        <DataPane />
        <div className="ml-[8px]"><Cards /></div>
        <div className="ml-[8px]"><Worksheet /></div>
      </div>
      <SheetTabs />
      <StatusBar />
      <Taskbar />
      <ContextMenu />
    </div>
  );
}
